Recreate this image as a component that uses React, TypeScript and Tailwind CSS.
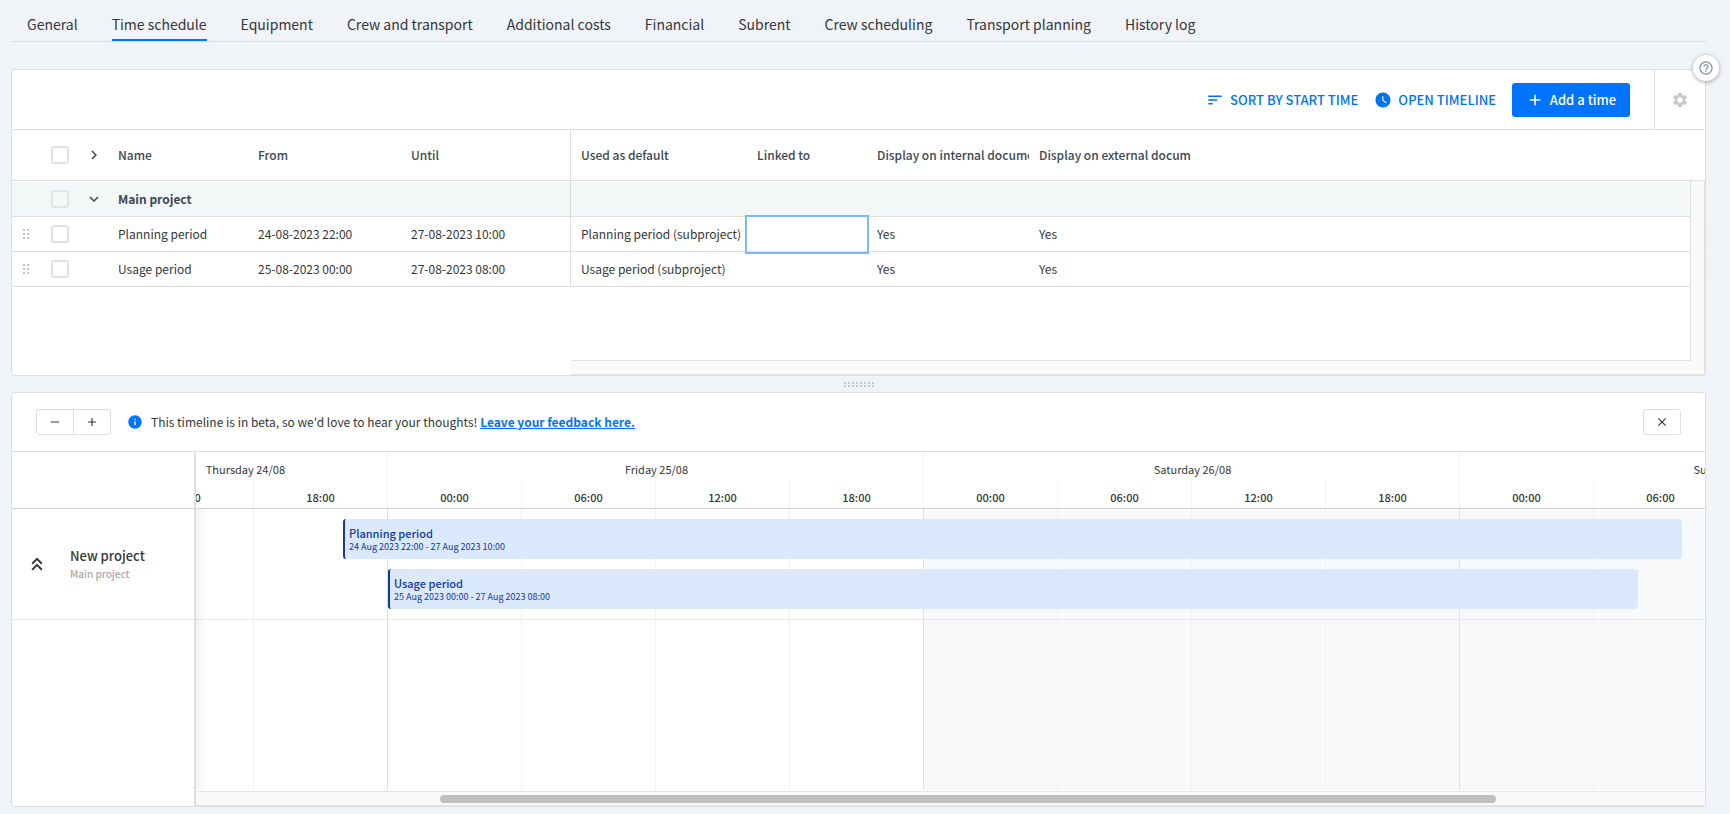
import React from 'react';
import {
  MdAdd,
  MdChevronRight,
  MdClose,
  MdExpandMore,
  MdHelpOutline,
  MdInfo,
  MdKeyboardDoubleArrowUp,
  MdRemove,
  MdSettings,
  MdSort,
  MdWatchLater
} from 'react-icons/md';

const TABS = [
  'General',
  'Time schedule',
  'Equipment',
  'Crew and transport',
  'Additional costs',
  'Financial',
  'Subrent',
  'Crew scheduling',
  'Transport planning',
  'History log'
];

interface Period {
  name: string;
  from: string;
  until: string;
  usedAs: string;
  label: string;
  // hours since the start of the first day on the timeline
  start: number;
  end: number;
}

const PERIODS: Period[] = [
  {
    name: 'Planning period',
    from: '24-08-2023 22:00',
    until: '27-08-2023 10:00',
    usedAs: 'Planning period (subproject)',
    label: '24 Aug 2023 22:00 - 27 Aug 2023 10:00',
    start: 22,
    end: 82
  },
  {
    name: 'Usage period',
    from: '25-08-2023 00:00',
    until: '27-08-2023 08:00',
    usedAs: 'Usage period (subproject)',
    label: '25 Aug 2023 00:00 - 27 Aug 2023 08:00',
    start: 24,
    end: 80
  }
];

const DAYS = [
  { label: 'Thursday 24/08', weekend: false },
  { label: 'Friday 25/08', weekend: false },
  { label: 'Saturday 26/08', weekend: true },
  { label: 'Sunday 27/08', weekend: true }
];

const HOURS = ['00:00', '06:00', '12:00', '18:00'];
const DAY_WIDTH = 536;

const toPx = (hours: number) => Math.round((hours * DAY_WIDTH) / 24);

const DragDots = () => (
  <svg width="8" height="12" viewBox="0 0 8 12" fill="#c4c4c6" aria-hidden="true">
    {[0, 4, 8].map((y) => (
      <React.Fragment key={y}>
        <rect x="0" y={y + 1} width="2" height="2" />
        <rect x="4" y={y + 1} width="2" height="2" />
      </React.Fragment>
    ))}
  </svg>
);

const Checkbox = ({ label }: { label: string }) => (
  <input
    type="checkbox"
    aria-label={label}
    className="block size-[18px] appearance-none rounded-[3px] border-2 border-[#e1e1e6]"
  />
);

const Tabs = () => (
  <nav className="flex h-[42px] items-end gap-[34px] border-b border-[#dcdfe1] px-4">
    {TABS.map((tab) => (
      <a
        key={tab}
        href="#"
        className={
          tab === 'Time schedule'
            ? 'border-b-2 border-[#0073ff] pb-[3px] text-[14px] leading-[24px] whitespace-nowrap'
            : 'border-b-2 border-transparent pb-[3px] text-[14px] leading-[24px] whitespace-nowrap'
        }
      >
        {tab}
      </a>
    ))}
  </nav>
);

const Toolbar = () => (
  <div className="flex h-[60px] items-center justify-end border-b border-[#dedede]">
    <button className="flex items-center gap-1.5 text-[13px] font-medium text-[#0073f5]">
      <MdSort size={18} />
      SORT BY START TIME
    </button>
    <button className="ml-4 flex items-center gap-1.5 text-[13px] font-medium text-[#0073f5]">
      <MdWatchLater size={18} />
      OPEN TIMELINE
    </button>
    <button className="ml-4 flex h-[34px] w-[118px] items-center justify-center gap-1.5 rounded-[3px] bg-[#0073ff] text-[13px] font-medium text-white">
      <MdAdd size={18} />
      Add a time
    </button>
    <button
      aria-label="Settings"
      className="ml-6 flex w-[51px] items-center justify-center self-stretch border-l border-[#dedede] text-[#c8c8c8]"
    >
      <MdSettings size={18} />
    </button>
  </div>
);

const TimesTable = () => (
  <table className="w-full table-fixed border-separate border-spacing-0 text-left text-[12px] leading-[18px] whitespace-nowrap">
    <colgroup>
      <col className="w-[28px]" />
      <col className="w-[40px]" />
      <col className="w-[28px]" />
      <col className="w-[140px]" />
      <col className="w-[153px]" />
      <col className="w-[170px]" />
      <col className="w-[176px]" />
      <col className="w-[120px]" />
      <col className="w-[162px]" />
      <col className="w-[162px]" />
      <col />
      <col className="w-[15px]" />
    </colgroup>
    <thead>
      <tr className="h-[51px] text-[#3d4852] [&>th]:overflow-hidden [&>th]:border-b [&>th]:border-[#dedede] [&>th]:p-0 [&>th]:font-medium">
        <th />
        <th>
          <div className="pl-[11px]">
            <Checkbox label="Select all times" />
          </div>
        </th>
        <th>
          <button aria-label="Expand all" className="block pl-[5px]">
            <MdChevronRight size={18} />
          </button>
        </th>
        <th><span className="pl-[10px]">Name</span></th>
        <th><span className="pl-[10px]">From</span></th>
        <th className="border-r"><span className="pl-[10px]">Until</span></th>
        <th><span className="pl-[10px]">Used as default</span></th>
        <th><span className="pl-[10px]">Linked to</span></th>
        <th><span className="pl-[10px]">Display on internal documents</span></th>
        <th><span className="pl-[10px]">Display on external documents</span></th>
        <th colSpan={2} />
      </tr>
    </thead>
    <tbody>
      <tr className="h-[36px] text-[#3d4852] [&>td]:border-b [&>td]:p-0">
        <td className="border-t border-t-white border-b-[#dedede] bg-[#f3f7f8]" />
        <td className="border-t border-t-white border-b-[#dedede] bg-[#f3f7f8]">
          <div className="pl-[11px]">
            <Checkbox label="Select main project" />
          </div>
        </td>
        <td className="border-t border-t-white border-b-[#dedede] bg-[#f3f7f8]">
          <button aria-label="Collapse main project" className="block pl-[5px]">
            <MdExpandMore size={18} />
          </button>
        </td>
        <td colSpan={3} className="border-t border-r border-t-white border-r-[#dedede] border-b-[#dedede] bg-[#f3f7f8] font-bold">
          <span className="pl-[10px]">Main project</span>
        </td>
        <td colSpan={5} className="border-t border-t-white border-b-[#dedede] bg-[#f3f7f8]" />
        <td className="border-x border-x-[#e0e0e0] border-b-[#fafafa] bg-[#fafafa]" />
      </tr>
      {PERIODS.map((period, i) => (
        <tr key={period.name} className="h-[35px] [&>td]:border-b [&>td]:border-[#dedede] [&>td]:p-0">
          <td>
            <div className="pl-[11px]">
              <DragDots />
            </div>
          </td>
          <td>
            <div className="pl-[11px]">
              <Checkbox label={`Select ${period.name}`} />
            </div>
          </td>
          <td />
          <td><span className="pl-[10px]">{period.name}</span></td>
          <td><span className="pl-[10px]">{period.from}</span></td>
          <td className="border-r"><span className="pl-[10px]">{period.until}</span></td>
          <td><span className="pl-[10px]">{period.usedAs}</span></td>
          <td className={i === 0 ? 'outline-2 outline-[#7ab8fb]' : ''} />
          <td><span className="pl-[10px]">Yes</span></td>
          <td><span className="pl-[10px]">Yes</span></td>
          <td />
          <td className="border-x border-b-[#fafafa]! bg-[#fafafa]" />
        </tr>
      ))}
    </tbody>
  </table>
);

const Times = () => (
  <section className="rounded-[3px] border border-[#dcdfe1] bg-white">
    <Toolbar />
    <TimesTable />
    <div className="flex h-[88px]">
      <div className="w-[559px]" />
      <div className="flex flex-1 flex-col">
        <div className="flex-1" />
        <div className="h-[15px] border-y border-[#e4e4e4] bg-[#fafafa]" />
      </div>
      <div className="flex w-[15px] flex-col">
        <div className="flex-1 border-x border-[#e4e4e4] bg-[#fafafa]" />
        <div className="h-[14px] border-r border-b border-[#e4e4e4] bg-[#fafafa]" />
      </div>
    </div>
  </section>
);

const Splitter = () => (
  <div className="flex h-[16px] items-center justify-center">
    <svg width="30" height="5" fill="#c4c7ca" aria-hidden="true">
      {[0, 4, 8, 12, 16, 20, 24, 28].map((x) => (
        <React.Fragment key={x}>
          <rect x={x} y="0" width="2" height="2" />
          <rect x={x} y="3" width="2" height="2" />
        </React.Fragment>
      ))}
    </svg>
  </div>
);

const TimelineHeader = () => (
  <div className="flex h-[59px] items-center border-b border-[#dedede] px-6">
    <div className="flex h-[26px] w-[75px] rounded-[3px] border border-[#dedede]">
      <button aria-label="Zoom out" className="flex flex-1 items-center justify-center border-r border-[#dedede]">
        <MdRemove size={14} />
      </button>
      <button aria-label="Zoom in" className="flex flex-1 items-center justify-center">
        <MdAdd size={14} />
      </button>
    </div>
    <MdInfo size={16} className="ml-4 text-[#0073ff]" />
    <p className="ml-2 text-[12px] leading-[18px]">
      This timeline is in beta, so we'd love to hear your thoughts!{' '}
      <a href="#" className="font-bold text-[#0073ff] underline">
        Leave your feedback here.
      </a>
    </p>
    <button
      aria-label="Close timeline"
      className="ml-auto flex h-[26px] w-[38px] items-center justify-center rounded-[3px] border border-[#dedede]"
    >
      <MdClose size={14} />
    </button>
  </div>
);

const Scale = () => (
  <div className="h-[57px] overflow-hidden border-b border-[#d4d4d4]">
    <div className="-ml-[345px] flex">
      {DAYS.map((day, i) => (
        <div key={day.label} className="w-[536px] shrink-0 border-l border-[#f3f3f3]">
          <div
            className={
              i === 0
                ? 'flex h-[28px] items-end justify-end pr-[102px] pb-0.5 text-[11px] leading-[18px]'
                : 'flex h-[28px] items-end justify-center pb-0.5 pl-0.5 text-[11px] leading-[18px]'
            }
          >
            {day.label}
          </div>
          <div className="flex h-[28px]">
            {HOURS.map((hour, j) => (
              <div
                key={hour}
                className={
                  j === 0
                    ? 'flex w-[133px] items-end justify-center pb-1 text-[11px] leading-[14px] font-medium'
                    : 'flex w-[134px] items-end justify-center border-l border-[#f3f3f3] pb-1 text-[11px] leading-[14px] font-medium'
                }
              >
                {hour}
              </div>
            ))}
          </div>
        </div>
      ))}
    </div>
  </div>
);

const GridLines = () => (
  <div className="absolute inset-0 -ml-[345px] flex">
    {DAYS.map((day) => (
      <div
        key={day.label}
        className={
          day.weekend
            ? 'flex w-[536px] shrink-0 border-l border-[#dfe1e3] bg-[#f8f9fb]'
            : 'flex w-[536px] shrink-0 border-l border-[#dedede]'
        }
      >
        <div className="w-[133px]" />
        <div className="w-[134px] border-l border-[#f1f2f3]" />
        <div className="w-[134px] border-l border-[#f1f2f3]" />
        <div className="w-[134px] border-l border-[#f1f2f3]" />
      </div>
    ))}
  </div>
);

const Timeline = () => (
  <section className="flex flex-1 flex-col overflow-hidden rounded-[3px] border border-[#dcdfe1] bg-white">
    <TimelineHeader />
    <div className="flex flex-1">
      <div className="w-[184px] shrink-0 border-r-2 border-[#dfdfdf]">
        <div className="h-[57px] border-b border-[#d4d4d4]" />
        <div className="flex h-[111px] items-center border-b border-[#e8e8e8] pl-[14px]">
          <button aria-label="Collapse project">
            <MdKeyboardDoubleArrowUp size={22} />
          </button>
          <div className="ml-[22px] pt-0.5">
            <div className="text-[13px] leading-[18px] font-medium">New project</div>
            <div className="text-[10px] leading-[18px] font-medium text-[#a9a9ad]">Main project</div>
          </div>
        </div>
      </div>
      <div className="flex min-w-0 flex-1 flex-col">
        <Scale />
        <div className="relative flex-1 overflow-hidden">
          <GridLines />
          <div className="relative -ml-[345px] flex h-[111px] flex-col gap-[10px] border-b border-[#e8eaeb] py-[10px]">
            {PERIODS.map((period) => (
              <div
                key={period.name}
                className="flex h-[40px] flex-col justify-center rounded-[3px] border-l-2 border-[#1238a5] bg-[#dbe9fd] pt-0.5 pl-1 text-[#1238a5]"
                style={{ marginLeft: toPx(period.start) + 1, width: toPx(period.end - period.start) - 1 }}
              >
                <div className="text-[11px] leading-[14px] font-medium">{period.name}</div>
                <div className="text-[9px] leading-[14px]">{period.label}</div>
              </div>
            ))}
          </div>
          <div className="absolute inset-y-0 left-0 w-3 bg-linear-to-r from-black/5 to-transparent" />
        </div>
        <div className="mt-px h-[15px] border-y border-[#e4e4e4] bg-[#fafafa] py-[3px]">
          <div className="ml-[244px] h-[8px] w-[70%] rounded-full bg-[#c0c0c0]" />
        </div>
      </div>
    </div>
  </section>
);

const App = () => (
  <main className="relative flex min-h-screen flex-col bg-[#f0f3f8] pr-6 pb-[7px] pl-[11px] font-['Noto_Sans_CJK_SC','Noto_Sans',sans-serif] text-[#333739]">
    <Tabs />
    <div className="relative mt-[27px]">
      <Times />
      <button
        aria-label="Help"
        className="absolute -top-[14px] -right-[13px] flex size-[26px] items-center justify-center rounded-full bg-white text-[#8f979e] shadow-[0_1px_4px_rgba(0,0,0,0.35)]"
      >
        <MdHelpOutline size={16} />
      </button>
    </div>
    <Splitter />
    <Timeline />
  </main>
);

export default App;
